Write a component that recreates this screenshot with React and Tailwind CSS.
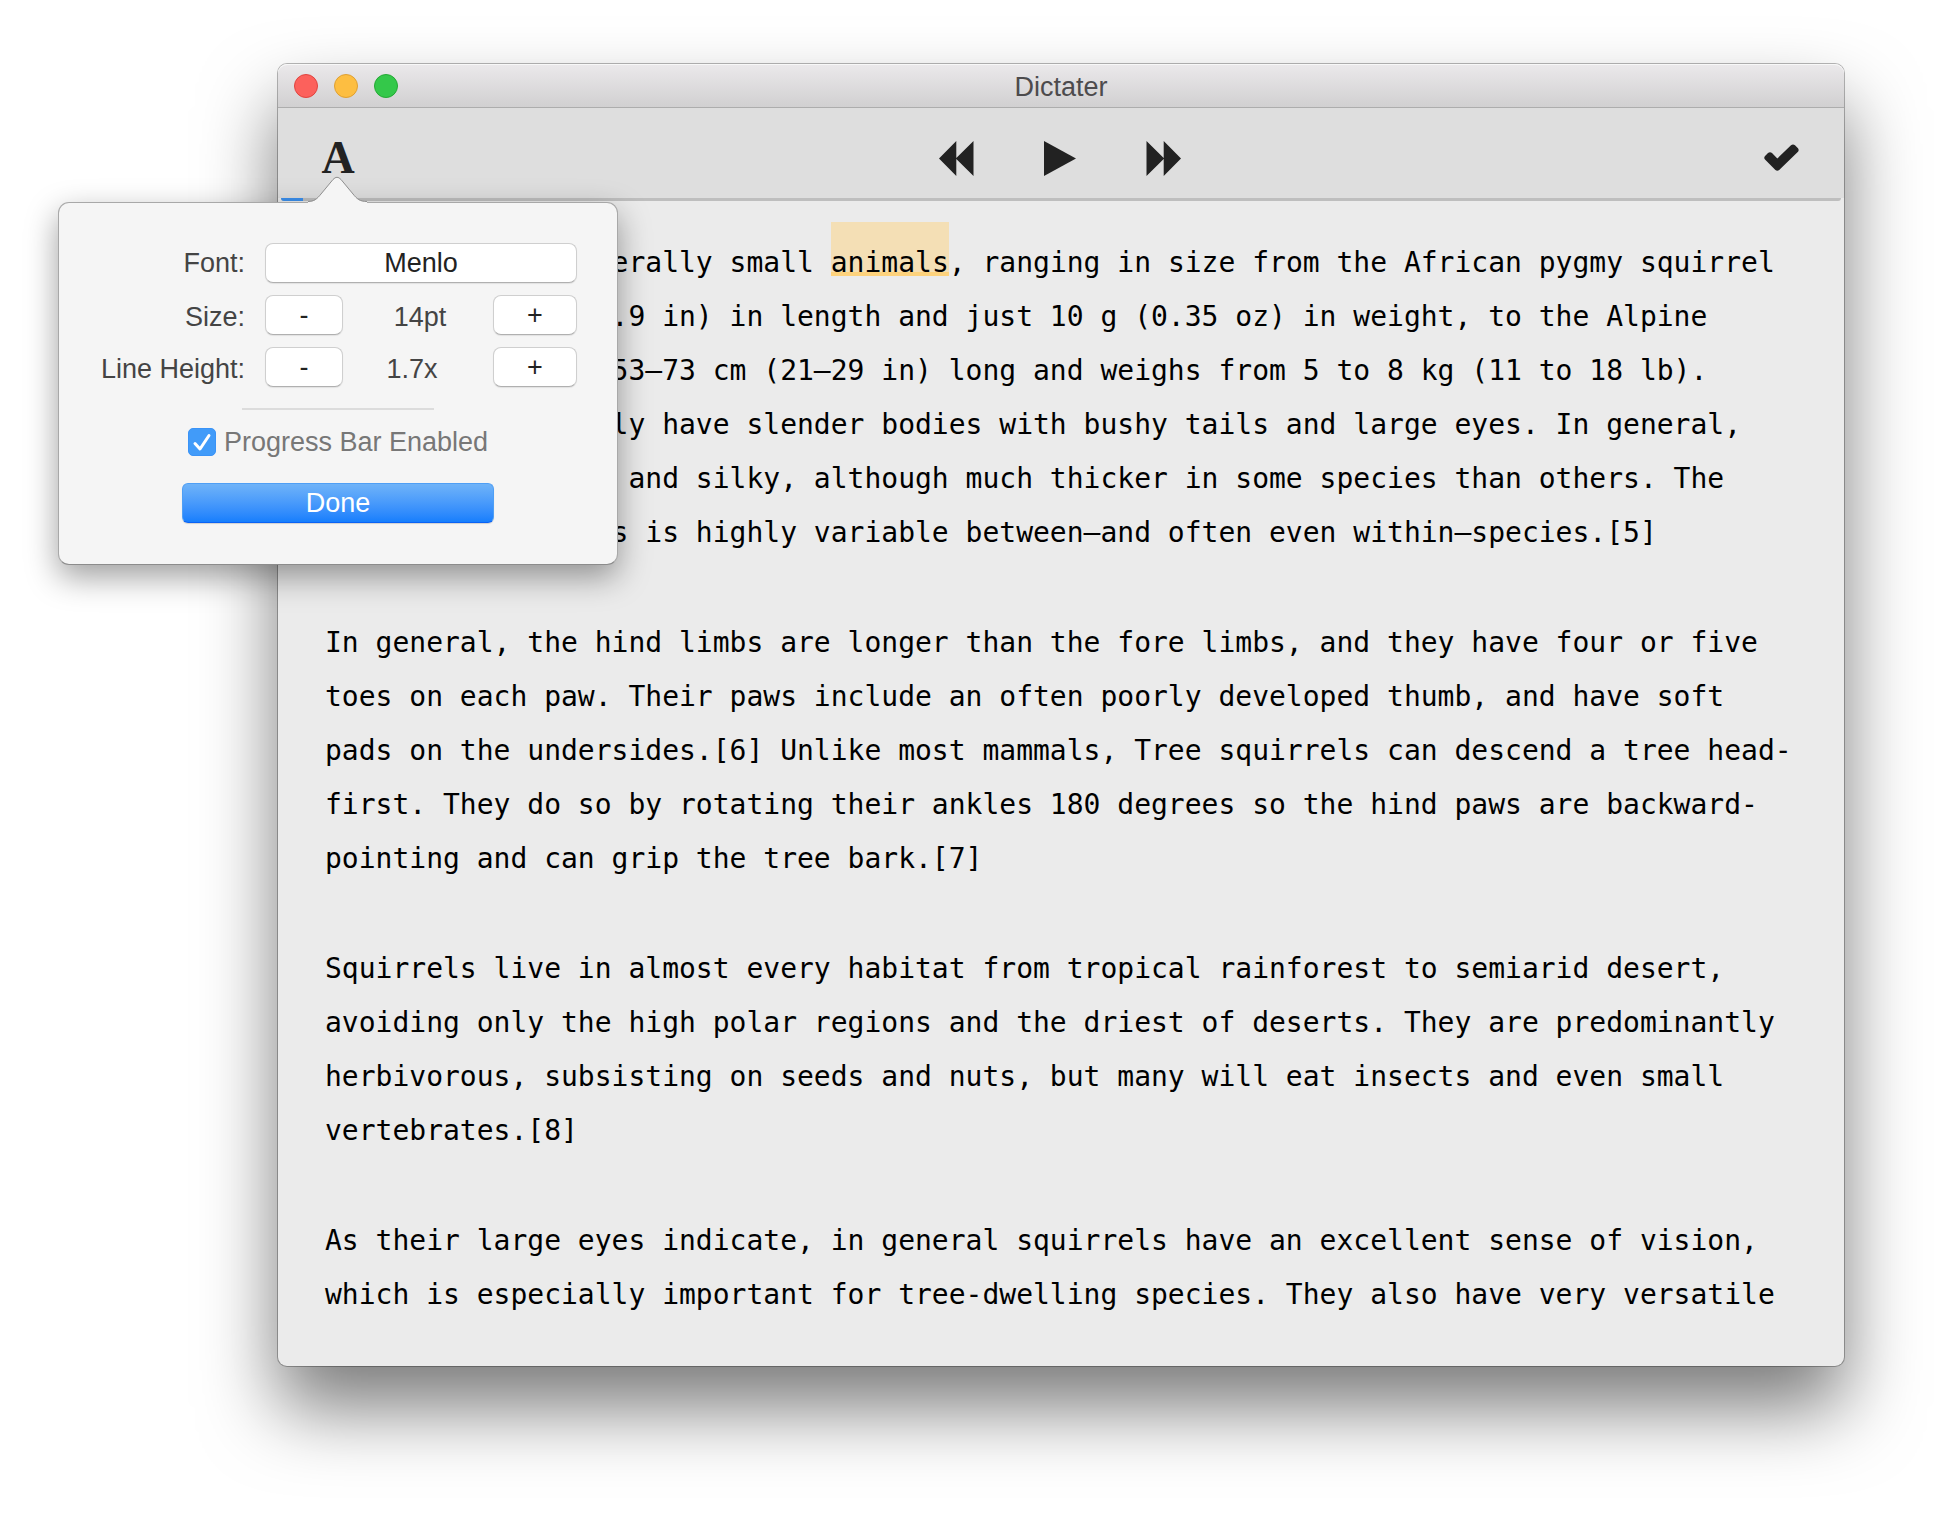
import { useState } from "react";

const HIGHLIGHTED = "animals";

const FIRST_PARAGRAPH = [
  "Squirrels are generally small ",
  ", ranging in size from the African pygmy squirrel at 7–10 cm (2.8–3.9 in) in length and just 10 g (0.35 oz) in weight, to the Alpine marmot, which is 53–73 cm (21–29 in) long and weighs from 5 to 8 kg (11 to 18 lb). Squirrels typically have slender bodies with bushy tails and large eyes. In general, their fur is soft and silky, although much thicker in some species than others. The color of squirrels is highly variable between—and often even within—species.[5]",
];

const PARAGRAPHS = [
  "In general, the hind limbs are longer than the fore limbs, and they have four or five toes on each paw. Their paws include an often poorly developed thumb, and have soft pads on the undersides.[6] Unlike most mammals, Tree squirrels can descend a tree head-first. They do so by rotating their ankles 180 degrees so the hind paws are backward-pointing and can grip the tree bark.[7]",
  "Squirrels live in almost every habitat from tropical rainforest to semiarid desert, avoiding only the high polar regions and the driest of deserts. They are predominantly herbivorous, subsisting on seeds and nuts, but many will eat insects and even small vertebrates.[8]",
  "As their large eyes indicate, in general squirrels have an excellent sense of vision, which is especially important for tree-dwelling species. They also have very versatile",
];

const LIGHTS = [
  ["Close", "bg-[#fc615c] border-[#e0443f]"],
  ["Minimize", "bg-[#fdbe41] border-[#dfa032]"],
  ["Zoom", "bg-[#34c84a] border-[#24a934]"],
];

function TitleBar() {
  return (
    <header className="grid h-11 grid-cols-3 items-center rounded-t-[9px] border-b border-[#adadad] bg-linear-to-b from-[#ebe9eb] to-[#d1d0d1] px-4 shadow-[inset_0_1px_0_#f8f8f8]">
      <div className="flex gap-4">
        {LIGHTS.map(([label, color]) => (
          <button key={label} aria-label={label} className={`size-6 rounded-full border ${color}`} />
        ))}
      </div>
      <h1 className="pt-0.5 text-center text-[27px] leading-8 text-[#4d4b4d]">Dictater</h1>
    </header>
  );
}

function PopoverArrow() {
  return (
    <svg width="60" height="27" viewBox="1 0 60 27" className="-mb-px" aria-hidden="true">
      <path d="M1 26 C7 26 10 23 14 18 L26 3.5 Q30 -1 34 3.5 L46 18 C50 23 53 26 60 26 L60 27 L1 27 Z" fill="#f5f5f5" />
      <path d="M1 25.5 C7 25.5 10 23 14 18 L26 3.5 Q30 -1 34 3.5 L46 18 C50 23 53 25.5 60 25.5" fill="none" stroke="#8f8f8f" strokeWidth="1" />
    </svg>
  );
}

const whiteButton =
  "h-10 rounded-lg border border-[#cfcfcf] border-b-[#b0b0b0] bg-white text-[#222] shadow-[0_1px_1px_rgba(0,0,0,0.08)]";

function Stepper({ label, value, onDown, onUp, valueClass }) {
  return (
    <div role="group" aria-label={label} className="flex items-center">
      <button aria-label={`Decrease ${label}`} onClick={onDown} className={`${whiteButton} w-[78px]`}>-</button>
      <output className={`flex-1 pt-1 text-center text-[#444] ${valueClass}`}>{value}</output>
      <button aria-label={`Increase ${label}`} onClick={onUp} className={`${whiteButton} w-[84px]`}>+</button>
    </div>
  );
}

function SettingsPopover() {
  const [size, setSize] = useState(14);
  const [height, setHeight] = useState(17);
  const [progress, setProgress] = useState(true);
  return (
    <div className="absolute top-full left-1/2 z-10 flex w-[560px] -translate-x-1/2 flex-col items-center text-[27px] leading-8">
      <div className="relative z-10">
        <PopoverArrow />
      </div>
      <div className="w-full rounded-[11px] border border-[#a8a8a8] border-b-[#8c8c8c] bg-[#f5f5f5] px-10 pt-10 pb-[41px] shadow-[0_12px_32px_rgba(0,0,0,0.38)]">
        <div className="grid grid-cols-[146px_312px] gap-x-5 gap-y-3">
          <label htmlFor="font" className="self-center text-right whitespace-nowrap text-[#444]">Font:</label>
          <button id="font" className={whiteButton}>Menlo</button>
          <span className="self-center pt-1 text-right text-[#444]">Size:</span>
          <Stepper label="Size" value={`${size}pt`} onDown={() => setSize(size - 1)} onUp={() => setSize(size + 1)} valueClass="pl-1" />
          <span className="self-center pt-1 text-right whitespace-nowrap text-[#444]">Line Height:</span>
          <Stepper label="Line Height" value={`${height / 10}x`} onDown={() => setHeight(height - 1)} onUp={() => setHeight(height + 1)} valueClass="pr-3" />
        </div>
        <hr className="mx-auto mt-[21px] w-48 border-t-2 border-[#dcdcdc]" />
        <label className="mt-4 flex items-center justify-center gap-2 text-[#777]">
          <span className="relative flex size-7">
            <input type="checkbox" checked={progress} onChange={(e) => setProgress(e.target.checked)} className="peer size-7 appearance-none rounded-[5px] border border-[#c4c4c4] bg-white checked:border-[#3a93f7] checked:bg-[#419bf9]" />
            <svg viewBox="0 0 28 28" className="pointer-events-none absolute inset-0 size-7 opacity-0 peer-checked:opacity-100" fill="none" stroke="#fff" strokeWidth="3" strokeLinecap="round" strokeLinejoin="round">
              <path d="M7 15.5 L12 21 L21 7.5" />
            </svg>
          </span>
          Progress Bar Enabled
        </label>
        <button className="mx-auto mt-[25px] block h-10 w-[312px] rounded-md border border-[#4f9ff5] border-b-[#0a62f5] bg-linear-to-b from-[#6fb3f8] to-[#157efd] text-white shadow-[0_1px_1px_rgba(0,0,0,0.15)]">
          Done
        </button>
      </div>
    </div>
  );
}

function Toolbar() {
  return (
    <div className="grid h-[90px] grid-cols-3 items-center bg-[#dedede] pt-2.5 pr-[45px] pl-[43px]">
      <div className="relative justify-self-start">
        <button aria-label="Text settings" className="block h-9 w-[34px] text-center font-['Liberation_Serif',serif] text-[46px] leading-9 font-bold text-[#222]">A</button>
        <SettingsPopover />
      </div>
      <div className="flex items-center justify-center gap-[70px] text-[#222]">
        <button aria-label="Rewind">
          <svg width="35" height="35" viewBox="0 0 35 35" fill="currentColor"><path d="M0 17.5 L17.3 0 V17 L34.5 0 V35 L17.3 18 V35 Z" /></svg>
        </button>
        <button aria-label="Play">
          <svg width="32" height="35" viewBox="0 0 32 35" fill="currentColor"><path d="M0 0 L32 17.5 L0 35 Z" /></svg>
        </button>
        <button aria-label="Fast forward">
          <svg width="35" height="35" viewBox="0 0 35 35" fill="currentColor"><path d="M35 17.5 L17.7 0 V17 L0.5 0 V35 L17.7 18 V35 Z" /></svg>
        </button>
      </div>
      <button aria-label="Done reading" className="justify-self-end text-[#222]">
        <svg width="35" height="28" viewBox="0 0 35 28" fill="currentColor">
          <path d="M1 12 L4 9 Q6 7.500 8 9 L13.300 14.500 L27 1.200 Q29 -0.300 31 1.200 L34 4.200 Q35.300 6 34 7.800 L15.200 26 Q13.300 27.500 11.400 26 L1 15.600 Q-0.500 13.800 1 12 Z" />
        </svg>
      </button>
    </div>
  );
}

export default function App() {
  return (
    <div className="min-h-screen bg-white pt-16 pr-28 pb-40 pl-[278px] font-['Liberation_Sans',Arial,sans-serif]">
      <main className="rounded-[9px] bg-[#ebebeb] shadow-[0_0_0_1px_rgba(0,0,0,0.28),0_42px_76px_rgba(0,0,0,0.52)]">
        <TitleBar />
        <Toolbar />
        <div role="progressbar" aria-label="Reading progress" aria-valuenow={1} className="mx-[3px] h-[3px] overflow-hidden rounded-b-sm bg-[#bebebe]">
          <div className="h-full w-[22px] bg-[#3b8fec]" />
        </div>
        <article className="flex flex-col gap-14 px-[47px] pt-[35px] pb-11 font-['DejaVu_Sans_Mono',monospace] text-[28px] leading-[54px] text-black">
          <p>
            {FIRST_PARAGRAPH[0]}
            <mark className="bg-transparent bg-[linear-gradient(to_top,transparent_3px,#fdd27c_3px,#fdd27c_7px,#f4dfb5_7px)] pt-6 text-black">{HIGHLIGHTED}</mark>
            {FIRST_PARAGRAPH[1]}
          </p>
          {PARAGRAPHS.map((text) => (
            <p key={text}>{text}</p>
          ))}
        </article>
      </main>
    </div>
  );
}
